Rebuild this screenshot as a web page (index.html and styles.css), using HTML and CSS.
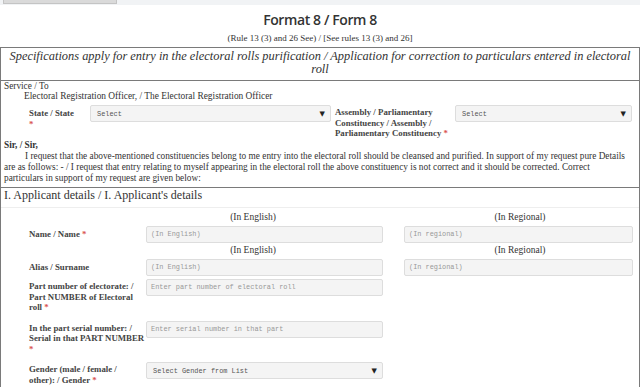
FILE: index.html
```html
<!DOCTYPE html>
<html>
<head>
<meta charset="utf-8">
<link rel="stylesheet" href="styles.css">
</head>
<body>
<div class="topbar"><div class="topbtn"></div></div>
<h1 class="title">Format 8 / Form 8</h1>
<p class="rule">(Rule 13 (3) and 26 See) / [See rules 13 (3) and 26]</p>
<div class="box">
  <div class="box-head">Specifications apply for entry in the electoral rolls purification / Application for correction to particulars entered in electoral roll</div>
  <div class="intro">
    <div class="to">Service / To</div>
    <div class="ero">Electoral Registration Officer, / The Electoral Registration Officer</div>
    <div class="state-row">
      <div class="lbl state-lbl">State / State<br><span class="req">*</span></div>
      <div class="select state-sel"><span>Select</span><span class="arrow">&#9660;</span></div>
      <div class="lbl ac-lbl">Assembly / Parliamentary<br>Constituency / Assembly /<br>Parliamentary Constituency <span class="req">*</span></div>
      <div class="select ac-sel"><span>Select</span><span class="arrow">&#9660;</span></div>
    </div>
    <div class="sir">Sir, / Sir,</div>
    <p class="para">I request that the above-mentioned constituencies belong to me entry into the electoral roll should be cleansed and purified. In support of my request pure Details are as follows: - / I request that entry relating to myself appearing in the electoral roll the above constituency is not correct and it should be corrected. Correct particulars in support of my request are given below:</p>
  </div>
  <div class="section">
    <h2 class="sec-title">I. Applicant details / I. Applicant's details</h2>
    <div class="cap-row"><span class="cap c1">(In English)</span><span class="cap c2">(In Regional)</span></div>
    <div class="frow">
      <div class="lbl flbl">Name / Name <span class="req">*</span></div>
      <div class="input w1">(In English)</div>
      <div class="input w2">(In regional)</div>
    </div>
    <div class="cap-row cap-2"><span class="cap c1">(In English)</span><span class="cap c2">(In Regional)</span></div>
    <div class="frow alias">
      <div class="lbl flbl">Alias / Surname</div>
      <div class="input w1">(In English)</div>
      <div class="input w2">(In regional)</div>
    </div>
    <div class="frow top">
      <div class="lbl flbl">Part number of electorate: /<br>Part NUMBER of Electoral<br>roll <span class="req">*</span></div>
      <div class="input w1">Enter part number of electoral roll</div>
    </div>
    <div class="frow top">
      <div class="lbl flbl">In the part serial number: /<br>Serial in that PART NUMBER<br><span class="req">*</span></div>
      <div class="input w1">Enter serial number in that part</div>
    </div>
    <div class="frow top">
      <div class="lbl flbl">Gender (male / female /<br>other): / Gender <span class="req">*</span></div>
      <div class="select w1 gsel"><span>Select Gender from List</span><span class="arrow">&#9660;</span></div>
    </div>
  </div>
</div>
</body>
</html>
```
FILE: styles.css
```css
html, body {
  margin: 0;
  padding: 0;
  background: #fff;
}
body {
  font-family: "Liberation Serif", "DejaVu Serif", serif;
  color: #333;
  font-size: 9.3px;
  width: 640px;
  height: 387px;
  overflow: hidden;
}
.topbar {
  height: 5px;
  background: #f1f3f5;
}
.topbtn {
  width: 112px;
  height: 3px;
  margin-left: 3px;
  background: #dadada;
  border: 1px solid #c4c4c4;
  border-top: none;
}
.title {
  margin: 6px 0 0;
  text-align: center;
  font-family: "Open Sans", sans-serif;
  font-weight: 600;
  font-size: 14px;
  line-height: 18px;
  color: #333;
  letter-spacing: -0.4px;
}
.rule {
  margin: 4px 0 0;
  text-align: center;
  font-size: 9px;
  line-height: 10px;
}
.box {
  margin-top: 4px;
  border: 1px solid #7a7a7a;
  border-bottom: none;
  height: 400px;
}
.box-head {
  font-style: italic;
  font-size: 12.4px;
  line-height: 13px;
  text-align: center;
  padding: 2px 6px 4px;
  border-bottom: 1px solid #7a7a7a;
  color: #333;
}
.intro {
  padding: 0 3px 3px;
  border-bottom: 1px solid #7a7a7a;
}
.to {
  line-height: 10px;
}
.ero {
  padding-left: 20px;
  line-height: 10px;
  font-size: 9.4px;
}
.state-row {
  display: flex;
  align-items: flex-start;
  margin-top: 4px;
  height: 35px;
}
.lbl {
  font-weight: bold;
  color: #444;
  line-height: 10.5px;
  font-size: 8.8px;
  white-space: nowrap;
}
.req {
  color: #d9534f;
}
.state-lbl {
  width: 50px;
  margin-left: 25px;
  margin-top: 3px;
  margin-right: 11px;
}
.select {
  box-sizing: border-box;
  height: 17px;
  border: 1px solid #ddd;
  background: #f4f4f4;
  border-radius: 2px;
  display: flex;
  align-items: center;
  justify-content: space-between;
  padding: 0 5px 0 6px;
  font-family: "Liberation Mono", monospace;
  font-size: 6.9px;
  color: #555;
}
.arrow {
  font-family: "DejaVu Sans", sans-serif;
  font-size: 7px;
  color: #222;
}
.state-sel {
  width: 241px;
}
.ac-lbl {
  width: 118px;
  margin-left: 4px;
  margin-top: 2px;
}
.ac-sel {
  width: 177px;
  margin-left: 2px;
}
.sir {
  font-weight: bold;
  line-height: 11px;
}
.para {
  margin: 0;
  padding-right: 10px;
  text-indent: 21px;
  line-height: 11px;
}
.sec-title {
  margin: 0;
  font-weight: normal;
  font-size: 12px;
  line-height: 14px;
  padding: 0 3px 5px;
  border-bottom: 1px solid #eee;
  color: #333;
}
.cap-row {
  display: flex;
  height: 10px;
  line-height: 10px;
  margin-top: 4px;
  font-size: 9.5px;
}
.cap-2 {
  margin-top: 2px;
}
.cap {
  text-align: center;
}
.c1 {
  margin-left: 212px;
  width: 80px;
}
.c2 {
  margin-left: 187px;
  width: 80px;
}
.frow {
  display: flex;
  align-items: center;
  height: 17px;
  margin-top: 4px;
}
.frow.top {
  align-items: flex-start;
  height: auto;
  margin-top: 3px;
  margin-bottom: 8px;
}
.flbl {
  width: 114px;
  margin-left: 28px;
  margin-right: 3px;
}
.frow.top .flbl {
  margin-top: 2px;
}
.input {
  box-sizing: border-box;
  height: 17px;
  border: 1px solid #ddd;
  background: #f4f4f4;
  border-radius: 2px;
  padding: 0 4px;
  line-height: 15px;
  font-family: "Liberation Mono", monospace;
  font-size: 6.9px;
  color: #999;
}
.w1 {
  width: 237px;
}
.w2 {
  width: 229px;
  margin-left: 21px;
}
.gsel {
  color: #555;
}
```
